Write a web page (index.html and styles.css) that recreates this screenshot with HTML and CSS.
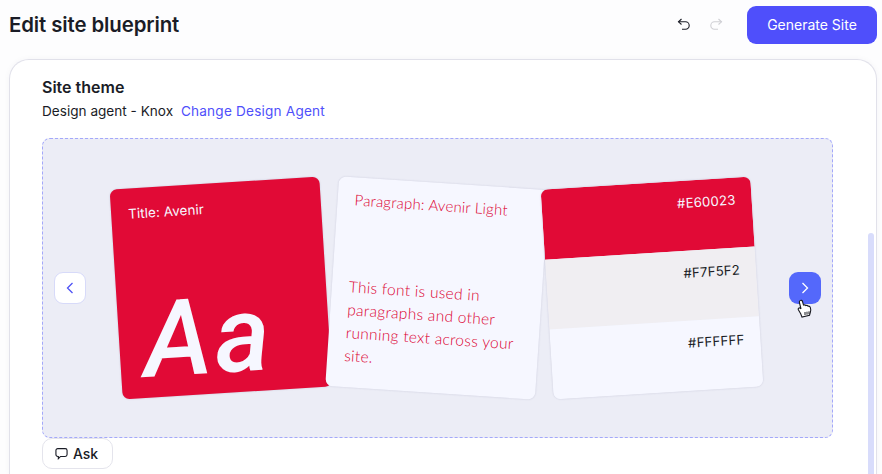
FILE: index.html
```html
<!DOCTYPE html>
<html lang="en">
<head>
  <meta charset="UTF-8" />
  <meta name="viewport" content="width=device-width, initial-scale=1.0"/>
  <title>Edit site blueprint</title>
  <link rel="stylesheet" href="styles.css">
</head>
<body>
  <header class="topbar">
    <h1>Edit site blueprint</h1>
    <div class="actions">
      <button class="icon-btn" aria-label="Undo">
        <svg width="14" height="14" viewBox="0 0 14 14" fill="none" stroke="#1a1c26" stroke-width="1.1"><path d="M4.500 1 1.500 3.800l3 2.700"/><path d="M1.500 3.800h7a3.600 3.600 0 0 1 0 7.400H5"/></svg>
      </button>
      <button class="icon-btn" aria-label="Redo">
        <svg width="14" height="14" viewBox="0 0 14 14" fill="none" stroke="#cfcfd4" stroke-width="1.1"><path d="M9.500 1l3 2.800-3 2.700"/><path d="M12.500 3.800h-7a3.600 3.600 0 0 0 0 7.400H9"/></svg>
      </button>
      <button class="generate">Generate Site</button>
    </div>
  </header>

  <main class="panel">
    <section class="theme">
      <h2>Site theme</h2>
      <p class="agent">Design agent - Knox <a href="#">Change Design Agent</a></p>

      <div class="stage">
        <button class="nav nav-prev" aria-label="Previous">
          <svg width="10" height="12" viewBox="0 0 10 12" fill="none" stroke="#4e52f5" stroke-width="1.3"><path d="M7.500 1 2.500 6l5 5"/></svg>
        </button>

        <div class="card card-left card-title">
          <span class="card-label">Title: Avenir</span>
          <span class="big-aa">Aa</span>
        </div>

        <div class="card card-right card-para">
          <span class="card-label">Paragraph: Avenir Light</span>
          <p>This font is used in paragraphs and other running text across your site.</p>
        </div>

        <div class="card card-left card-colors">
          <div class="swatch swatch-red">#E60023</div>
          <div class="swatch swatch-grey">#F7F5F2</div>
          <div class="swatch swatch-white">#FFFFFF</div>
        </div>

        <button class="nav nav-next" aria-label="Next">
          <svg width="10" height="12" viewBox="0 0 10 12" fill="none" stroke="#fff" stroke-width="1.3"><path d="M2.500 1l5 5-5 5"/></svg>
        </button>
        <svg class="hand" width="17" height="20" viewBox="0 0 17 20">
          <path d="M3 1.600c1-.7 2.200-.2 2.500.9l1 3.600c.9-.4 1.900-.2 2.400.5.800-.3 1.700-.1 2.200.6.900-.2 1.900.3 2.200 1.200.5 1.500.6 3.200.1 4.700l-.9 3.200-7.500 1.800-1.300-3.400L1.500 11c-.6-.9-.3-1.700.4-2 .6-.3 1.300 0 1.800.5L4 10 2.400 3.500C2.200 2.700 2.400 2 3 1.600z" fill="#fff" stroke="#17181f" stroke-width="1.1"/>
          <path d="M8 13v3M10 12.700v3M12 12.300v3" stroke="#17181f" stroke-width="1"/>
        </svg>
      </div>

      <button class="ask">
        <svg width="13" height="13" viewBox="0 0 14 14" fill="none" stroke="#1a1c26" stroke-width="1.2"><path d="M3 1.800h8a2 2 0 0 1 2 2v4.400a2 2 0 0 1-2 2H6L3.600 12.600v-2.400H3a2 2 0 0 1-2-2V3.800a2 2 0 0 1 2-2z"/></svg>
        Ask
      </button>
    </section>
    <div class="scrollbar"></div>
  </main>
</body>
</html>
```
FILE: styles.css
```css
html, body {
  height: 100%;
}
body {
  margin: 0;
  height: 474px;
  overflow: hidden;
  background: #fdfdfe;
  color: #1a1c26;
  font-family: 'Inter', sans-serif;
  display: flex;
  flex-direction: column;
}
button {
  font-family: inherit;
  cursor: pointer;
}
.topbar {
  flex: none;
  height: 59px;
  display: flex;
  align-items: center;
  justify-content: space-between;
  padding: 0 5px 10px 9px;
  box-sizing: border-box;
}
h1 {
  margin: 0;
  font-size: 20.4px;
  font-weight: 600;
  letter-spacing: -0.1px;
}
.actions {
  display: flex;
  align-items: center;
}
.icon-btn {
  width: 32px;
  height: 32px;
  padding: 0;
  border: 0;
  background: none;
  display: flex;
  align-items: center;
  justify-content: center;
}
.generate {
  margin-left: 15px;
  width: 130px;
  height: 38px;
  border: 0;
  border-radius: 9px;
  background: #4f4ffb;
  color: #fff;
  font-size: 14px;
  font-weight: 400;
}
.panel {
  position: relative;
  flex: 1;
  margin: 0 5px 0 9px;
  padding: 0 0 0 32px;
  background: #fff;
  border: 1px solid #e1e1ea;
  border-bottom: 0;
  border-radius: 20px 20px 0 0;
  box-shadow: 0 0 6px rgba(30, 30, 80, 0.04);
}
.theme {
  width: 791px;
  padding-top: 17px;
}
h2 {
  margin: 0;
  font-size: 16px;
  line-height: 20px;
  font-weight: 600;
}
.agent {
  margin: 5px 0 0;
  font-size: 13.6px;
  line-height: 18px;
}
.agent a {
  margin-left: 4px;
  color: #4f4ffb;
  text-decoration: none;
  font-size: 13.6px;
  letter-spacing: 0.2px;
}
.stage {
  position: relative;
  height: 300px;
  margin-top: 18px;
  padding-right: 2px;
  box-sizing: border-box;
  border: 1px dashed #a3a8fa;
  border-radius: 8px;
  background: #ecedf6;
  display: flex;
  align-items: center;
  justify-content: center;
  gap: 5.5px;
}
.card {
  flex: none;
  width: 210px;
  height: 210px;
  box-sizing: border-box;
  border-radius: 7px;
  box-shadow: 0 0 2px rgba(60, 60, 110, 0.2);
}
.card-left {
  transform: rotate(-3.6deg);
}
.card-right {
  transform: rotate(3.8deg);
}
.card-label {
  display: block;
  font-size: 13px;
  line-height: 16px;
}
.card-title {
  background: #e10a36;
  color: #f6f7ff;
  padding: 17px 17px;
  position: relative;
}
.card-title .card-label {
  font-size: 13.4px;
  letter-spacing: 0.1px;
}
.big-aa {
  position: absolute;
  left: 24px;
  bottom: 7px;
  font-family: 'Roboto', sans-serif;
  font-size: 106px;
  line-height: 100px;
  font-style: italic;
  font-weight: 500;
  letter-spacing: 3px;
  color: #f6f7ff;
}
.card-para {
  background: #f6f7ff;
  color: #dc0030;
  padding: 14px 17px;
  font-family: 'Lato', sans-serif;
}
.card-para .card-label {
  font-size: 15px;
  font-weight: 300;
  letter-spacing: 0.2px;
}
.card-para p {
  margin: 68px 0 0;
  font-size: 15.5px;
  font-weight: 300;
  line-height: 23px;
  letter-spacing: 0.3px;
}
.card-colors {
  display: flex;
  flex-direction: column;
  overflow: hidden;
}
.swatch {
  flex: 1;
  padding: 14px 16px;
  text-align: right;
  font-size: 13.2px;
  line-height: 16px;
  letter-spacing: 0.2px;
}
.swatch-red {
  background: #e10a36;
  color: #f6f7ff;
}
.swatch-grey {
  background: #f0eef2;
}
.swatch-white {
  background: #f6f7ff;
}
.nav {
  position: absolute;
  top: 133px;
  width: 32px;
  height: 32px;
  padding: 0;
  border-radius: 9px;
  display: flex;
  align-items: center;
  justify-content: center;
}
.nav-prev {
  left: 11px;
  background: #fff;
  border: 1px solid #d7daf9;
}
.nav-next {
  right: 11px;
  background: #5468fb;
  border: 0;
}
.hand {
  position: absolute;
  left: 754px;
  top: 160px;
}
.ask {
  height: 31px;
  width: 71px;
  padding: 0 2px 0 0;
  display: flex;
  align-items: center;
  justify-content: center;
  gap: 5px;
  background: #fff;
  border: 1px solid #e4e4ec;
  border-radius: 10px;
  color: #1a1c26;
  font-size: 14px;
  font-weight: 500;
}
.scrollbar {
  position: absolute;
  right: 2px;
  top: 173px;
  bottom: 0;
  width: 6px;
  border-radius: 3px 3px 0 0;
  background: #d8dcfb;
}
```
